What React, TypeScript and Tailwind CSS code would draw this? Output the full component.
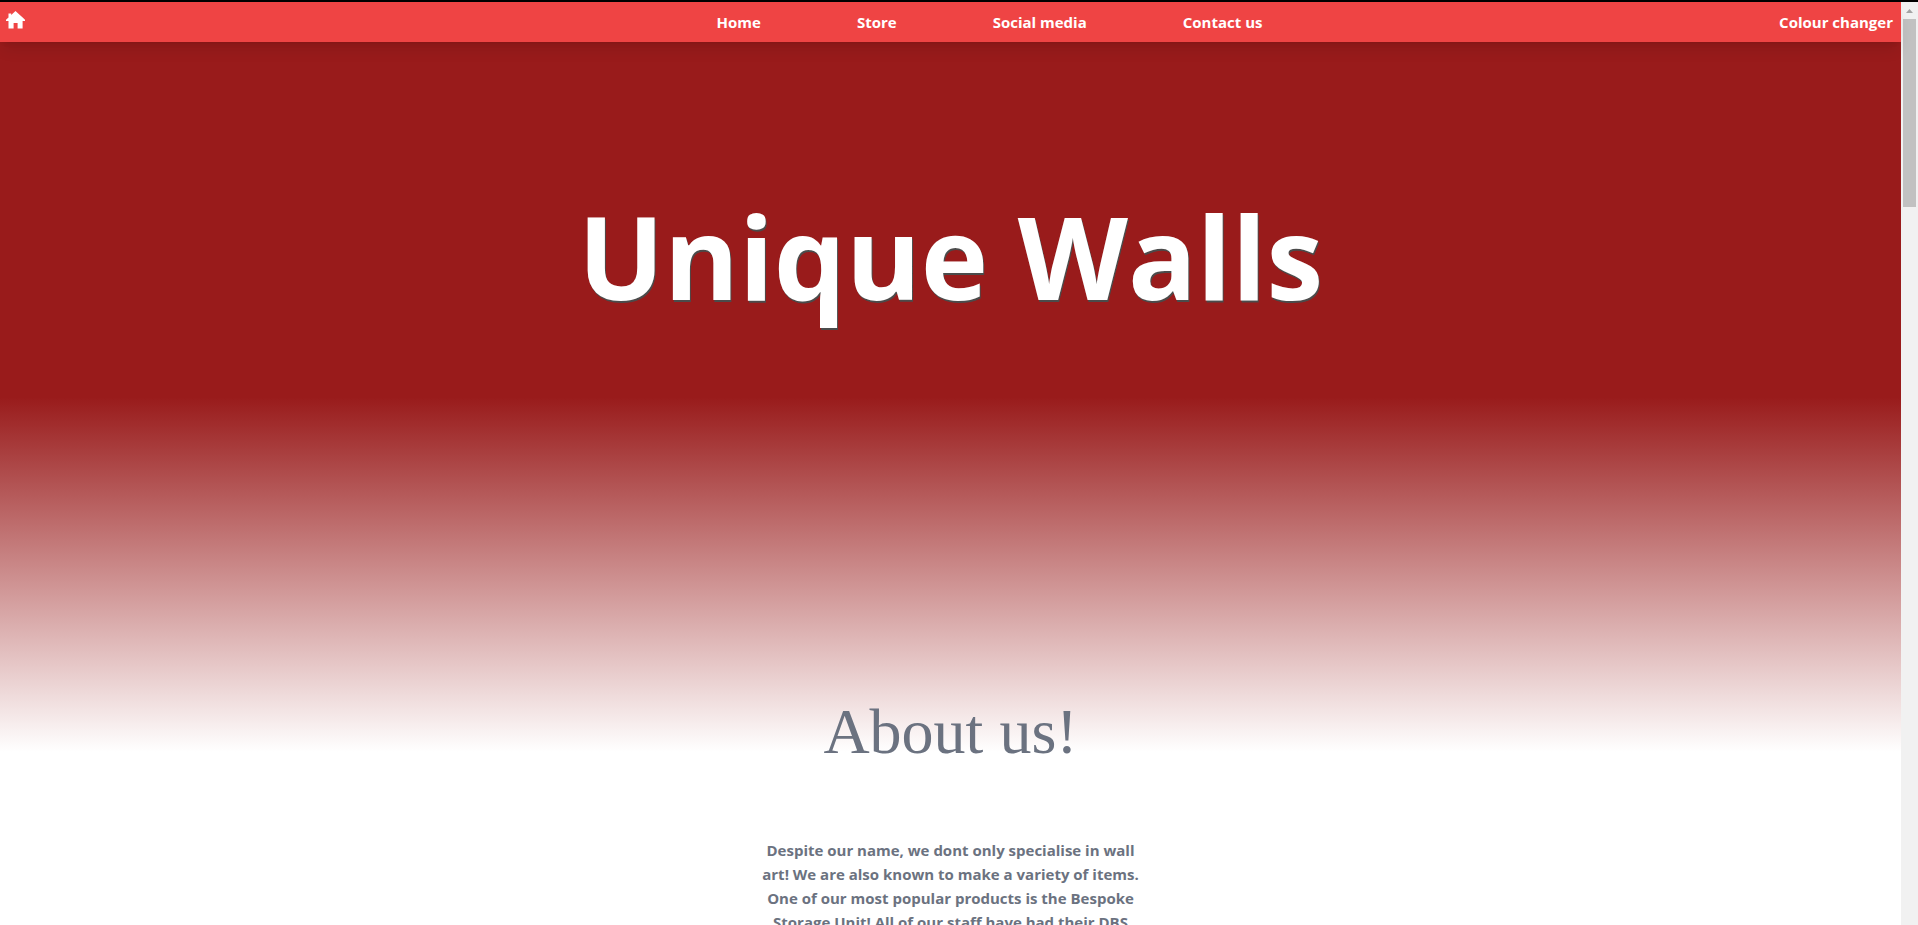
const links = ["Home", "Store", "Social media", "Contact us"];

function HomeIcon() {
  return (
    <svg viewBox="0 0 20 18" className="h-[18px] w-5 fill-white" aria-hidden="true">
      <path d="M9.5 0 L13.3 3.4 L16.4 6.2 L19 8.8 V10 H16.6 V17.5 H11.6 V12 H7.6 V17.5 H2.5 V10 H0 V8.8 L2.5 6.4 V2.4 H5.2 V3.9 Z" />
    </svg>
  );
}

function ScrollTrack() {
  return (
    <div className="flex w-[17px] shrink-0 flex-col items-center bg-[#f1f1f1]" aria-hidden="true">
      <div className="flex h-[17px] items-center">
        <svg viewBox="0 0 7 4" className="h-1 w-[7px] fill-[#a3a3a3]">
          <path d="M3.5 0 7 4H0Z" />
        </svg>
      </div>
      <div className="h-[188px] w-[13px] bg-[#c1c1c1]" />
    </div>
  );
}

export default function App() {
  return (
    <div className="flex h-screen overflow-hidden border-t-2 border-black bg-white font-['Open_Sans','Noto_Sans',sans-serif]">
      <div className="flex min-w-0 flex-1 flex-col">
        <header className="z-10 grid h-10 shrink-0 grid-cols-[1fr_auto_1fr] items-center bg-[#ef4444] pr-2 pl-1.5 text-[15px] font-bold text-white shadow-lg">
          <a href="#home" aria-label="Home page" className="mb-1 justify-self-start">
            <HomeIcon />
          </a>
          <nav className="flex gap-24 pl-20">
            {links.map((label) => (
              <a key={label} href="#">{label}</a>
            ))}
          </nav>
          <button type="button" className="justify-self-end">Colour changer</button>
        </header>
        <main className="min-h-0 flex-1 overflow-hidden text-center">
          <section className="h-[710px] bg-linear-to-b/srgb from-[#991b1b] from-50% to-white pt-36">
            <h1 className="text-[114px] leading-[140px] font-bold text-white [text-shadow:1px_2px_#4b4b4b]">Unique Walls</h1>
          </section>
          <section className="-mt-13 text-[#6b7280]">
            <h2 className="font-['Liberation_Serif',serif] text-[64px] leading-[64px]">About us!</h2>
            <p className="mt-[74px] text-[15px] leading-6 font-bold">
              Despite our name, we dont only specialise in wall<br />
              art! We are also known to make a variety of items.<br />
              One of our most popular products is the Bespoke<br />
              Storage Unit! All of our staff have had their DBS
            </p>
          </section>
        </main>
      </div>
      <ScrollTrack />
    </div>
  );
}
